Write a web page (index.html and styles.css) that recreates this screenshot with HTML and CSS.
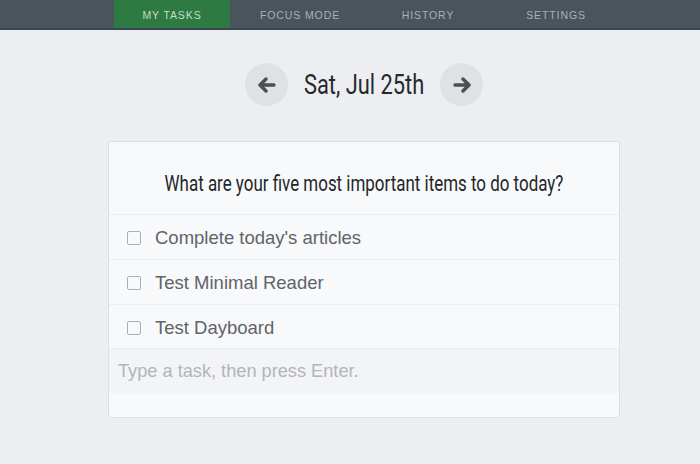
FILE: index.html
```html
<!DOCTYPE html>
<html>
<head lang="en">
    <meta charset="UTF-8">
    <title>My Tasks</title>
    <link rel="stylesheet" href="styles.css">
</head>
<body>
<div id="nav">
    <ul id="menu">
        <li class="active">MY TASKS</li>
        <li>FOCUS MODE</li>
        <li>HISTORY</li>
        <li>SETTINGS</li>
    </ul>
</div>
<div id="date">
    <span class="circle">
        <svg width="18" height="16" viewBox="0 0 18 16"><path d="M8 2 L2 8 L8 14 M2.5 8 H16" fill="none" stroke="#4a4f55" stroke-width="3.4" stroke-linecap="round" stroke-linejoin="round"/></svg>
    </span>
    <h1><span class="narrow">Sat, Jul 25th</span></h1>
    <span class="circle">
        <svg width="18" height="16" viewBox="0 0 18 16"><path d="M10 2 L16 8 L10 14 M15.5 8 H2" fill="none" stroke="#4a4f55" stroke-width="3.4" stroke-linecap="round" stroke-linejoin="round"/></svg>
    </span>
</div>
<div id="card">
    <h2><span class="narrow">What are your five most important items to do today?</span></h2>
    <ul id="tasks">
        <li><span class="box"></span>Complete today's articles</li>
        <li><span class="box"></span>Test Minimal Reader</li>
        <li><span class="box"></span>Test Dayboard</li>
    </ul>
    <div class="input">Type a task, then press Enter.</div>
</div>
</body>
</html>
```

FILE: styles.css
```css
*{
    margin: 0;
    padding: 0;
}
ul{
    list-style: none;
}
body{
    background: #eceef2;
    font-family: "Liberation Sans", Arial, sans-serif;
    width: 700px;
    height: 464px;
    overflow: hidden;
}
#nav{
    height: 28px;
    background: #49545c;
    border-bottom: 2px solid #3b454c;
}
#menu{
    display: flex;
    margin-left: 114px;
}
#menu li{
    width: 116px;
    margin-right: 12px;
    height: 28px;
    line-height: 30px;
    text-align: center;
    font-size: 10.5px;
    letter-spacing: 0.9px;
    color: #aab1b7;
}
#menu .active{
    background: #2d7a42;
    color: #c8dccb;
}
#date{
    display: flex;
    justify-content: center;
    align-items: center;
    margin-top: 33px;
    margin-left: 28px;
}
#date h1{
    font-family: Roboto, sans-serif;
    font-weight: normal;
    font-size: 28px;
    color: #25292d;
    width: 122px;
    margin: 0 15px;
    white-space: nowrap;
    display: flex;
    justify-content: center;
}
.narrow{
    display: inline-block;
    transform: scaleX(0.78);
    white-space: nowrap;
}
#card h2 .narrow{
    transform: scaleX(0.77);
}
.circle{
    width: 43px;
    height: 43px;
    border-radius: 50%;
    background: #dfe1e5;
    display: flex;
    align-items: center;
    justify-content: center;
}
#card{
    width: 510px;
    margin: 35px 0 0 108px;
    background: #f8f9fb;
    border: 1px solid #dcdfe3;
    border-radius: 3px;
    padding-bottom: 24px;
}
#card h2{
    font-family: Roboto, sans-serif;
    font-weight: normal;
    font-size: 22px;
    color: #222629;
    height: 72px;
    line-height: 84px;
    border-bottom: 1px solid #eceef0;
    display: flex;
    justify-content: center;
    white-space: nowrap;
}
#tasks li{
    border-bottom: 1px solid #eceef0;
    display: flex;
    align-items: center;
    padding: 2px 0 0 18px;
    box-sizing: border-box;
    height: 45px;
    font-size: 18.5px;
    color: #606468;
}
#tasks li:last-child{
    height: 44px;
}
.box{
    width: 12px;
    height: 12px;
    border: 1.5px solid #a7afb3;
    border-radius: 2px;
    margin-right: 14px;
}
.input{
    height: 44px;
    line-height: 44px;
    background: #f3f4f6;
    padding-left: 9px;
    font-size: 18.2px;
    color: #b2b5b9;
}
```
